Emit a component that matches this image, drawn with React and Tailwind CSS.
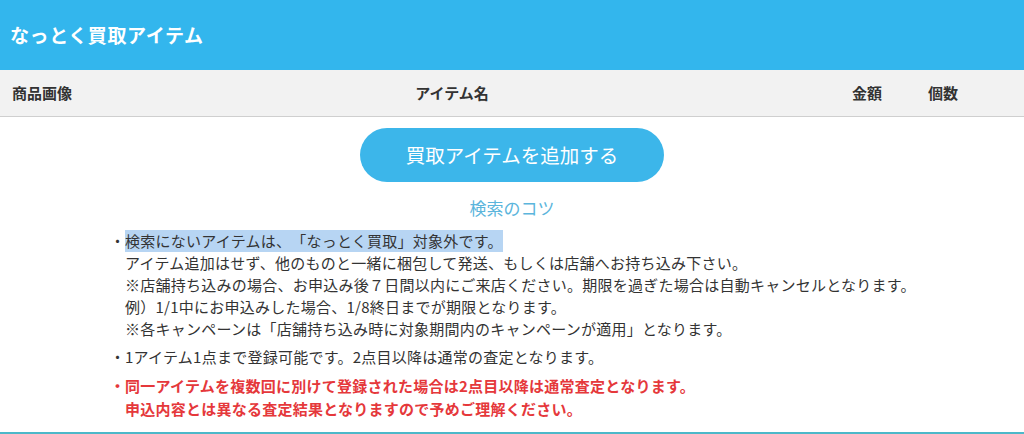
export default function App() {
  const font = { fontFamily: '"Noto Sans CJK JP", "Noto Sans", sans-serif' };
  return (
    <div className="relative w-[1024px] h-[434px] bg-white overflow-hidden flex flex-col [text-spacing-trim:space-all]" style={font}>
      <div className="h-[70px] bg-[#33b6ed] flex items-center px-[10px] shrink-0">
        <h1 className="text-white font-bold text-[19px] tracking-[0.6px]">なっとく買取アイテム</h1>
      </div>
      <div className="h-[47px] bg-[#f2f2f2] border-b border-[#cfcfcf] flex items-center text-[15px] font-bold text-[#333] shrink-0">
        <div className="w-[160px] pl-[12px]">商品画像</div>
        <div className="w-[584px] text-center">アイテム名</div>
        <div className="w-[184px] pl-[108px]">金額</div>
        <div className="flex-1">個数</div>
      </div>
      <div className="flex flex-col items-center pt-[11px] shrink-0">
        <button className="w-[304px] h-[54px] rounded-full bg-[#3cb6ea] text-white text-[19.5px]">
          買取アイテムを追加する
        </button>
        <div className="mt-[14px] text-[17px] leading-[24px] text-[#5bb5dc]">検索のコツ</div>
      </div>
      <div className="pl-[110px] pt-[10px] text-[15px] text-[#333] leading-[22px] tracking-[0.25px]">
        <div className="flex">
          <span className="w-[15px] shrink-0 tracking-normal">・</span>
          <div>
            <div><span className="inline-block bg-[#b7d5f3]">検索にないアイテムは、「なっとく買取」対象外です。</span></div>
            <div>アイテム追加はせず、他のものと一緒に梱包して発送、もしくは店舗へお持ち込み下さい。</div>
            <div>※店舗持ち込みの場合、お申込み後７日間以内にご来店ください。期限を過ぎた場合は自動キャンセルとなります。</div>
            <div>例）1/1中にお申込みした場合、1/8終日までが期限となります。</div>
            <div>※各キャンペーンは「店舗持ち込み時に対象期間内のキャンペーンが適用」となります。</div>
          </div>
        </div>
        <div className="flex mt-[6px]">
          <span className="w-[15px] shrink-0 tracking-normal">・</span>
          <div>1アイテム1点まで登録可能です。2点目以降は通常の査定となります。</div>
        </div>
        <div className="flex mt-[6px] text-[#e5383b] font-bold leading-[23px]">
          <span className="w-[15px] shrink-0 tracking-normal">・</span>
          <div>
            <div>同一アイテムを複数回に別けて登録された場合は2点目以降は通常査定となります。</div>
            <div>申込内容とは異なる査定結果となりますので予めご理解ください。</div>
          </div>
        </div>
      </div>
      <div className="absolute left-0 top-[432px] w-[1024px] h-[2px] bg-[#4cb8c9]" />
    </div>
  );
}
